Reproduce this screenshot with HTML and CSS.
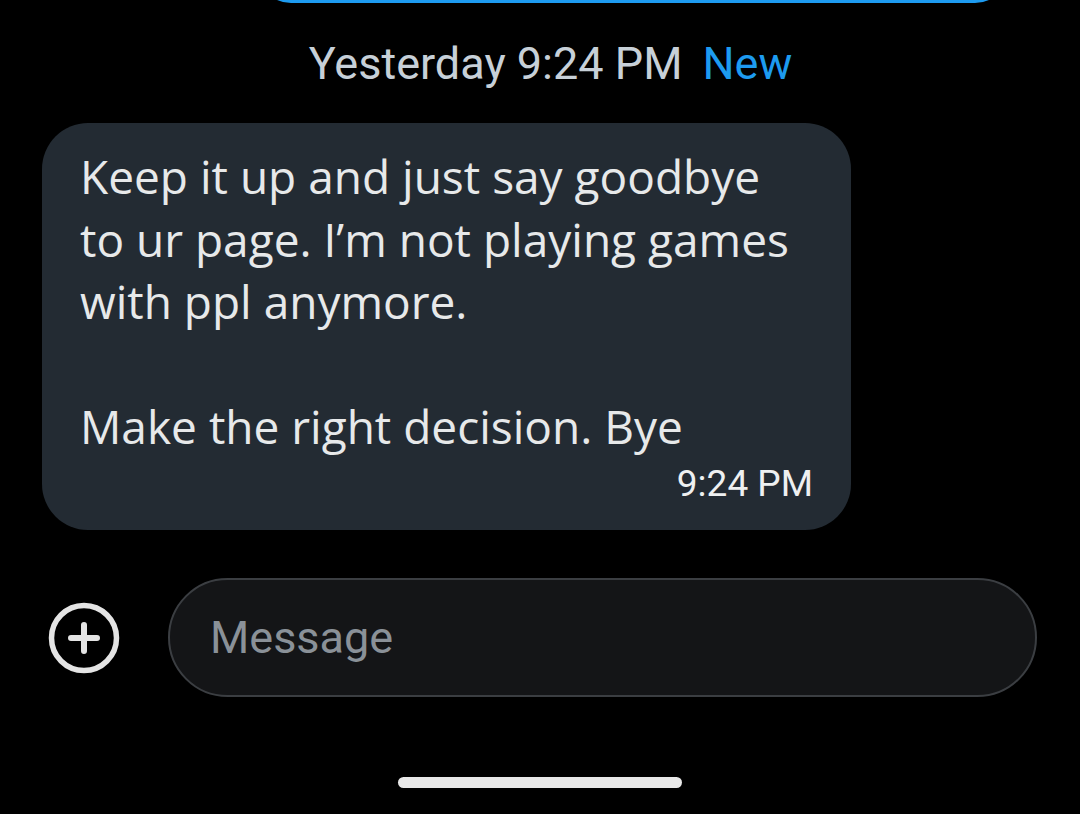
FILE: index.html
```html
<!DOCTYPE html>
<html>
<head>
<meta charset="utf-8">
<link rel="stylesheet" href="styles.css">
</head>
<body>
<div class="screen">
  <div class="top-pill"></div>
  <div class="date-row">
    <span class="date">Yesterday 9:24 PM</span>
    <span class="new">New</span>
  </div>
  <div class="bubble">
    <p class="msg">Keep it up and just say goodbye<br>to ur page. I’m not playing games<br>with ppl anymore.</p>
    <p class="msg gap">Make the right decision. Bye</p>
    <div class="time">9:24 PM</div>
  </div>
  <div class="composer">
    <svg class="plus" width="74" height="74" viewBox="0 0 74 74">
      <circle cx="37" cy="37" r="32.5" fill="none" stroke="#e4e4e4" stroke-width="5.5"/>
      <path d="M37 24v26M24 37h26" stroke="#e4e4e4" stroke-width="6" stroke-linecap="round"/>
    </svg>
    <div class="input">Message</div>
  </div>
  <div class="home-bar"></div>
</div>
</body>
</html>
```
FILE: styles.css
```css
html, body {
  margin: 0;
  padding: 0;
  background: #000;
}
.screen {
  width: 1080px;
  height: 814px;
  overflow: hidden;
  background: #000;
  display: flex;
  flex-direction: column;
}
.top-pill {
  margin: -63px 0 0 258px;
  width: 744px;
  height: 60px;
  border: 3px solid #1d9bf0;
  border-radius: 40px;
  flex: none;
}
.date-row {
  display: flex;
  justify-content: center;
  align-items: center;
  gap: 20px;
  height: 60px;
  margin-top: 30px;
  margin-left: 21px;
  font-family: Roboto, "Liberation Sans", sans-serif;
  font-size: 45px;
}
.date {
  color: #c7d0d8;
}
.new {
  color: #1d9bf0;
}
.bubble {
  margin: 30px 0 0 42px;
  width: 809px;
  height: 407px;
  box-sizing: border-box;
  background: #232b33;
  border-radius: 46px;
  padding: 22px 38px 0 38px;
  display: flex;
  flex-direction: column;
  flex: none;
}
.msg {
  margin: 0;
  font-family: "Open Sans", "Noto Sans", sans-serif;
  font-size: 46px;
  line-height: 62.5px;
  color: #e7e9ea;
}
.msg.gap {
  margin-top: 62px;
}
.time {
  align-self: flex-end;
  margin-top: 5px;
  font-family: Roboto, "Liberation Sans", sans-serif;
  font-size: 37px;
  color: #eef0f1;
}
.composer {
  display: flex;
  align-items: center;
  margin-top: 48px;
  padding-left: 47px;
  flex: none;
}
.plus {
  flex: none;
}
.input {
  margin-left: 47px;
  width: 869px;
  height: 119px;
  box-sizing: border-box;
  border: 2px solid #3b3e42;
  border-radius: 60px;
  background: #141517;
  padding-left: 40px;
  display: flex;
  align-items: center;
  font-family: Roboto, "Liberation Sans", sans-serif;
  font-size: 45px;
  color: #8a9198;
}
.home-bar {
  margin: 80px 0 0 398px;
  width: 284px;
  height: 11px;
  border-radius: 6px;
  background: #e8e8e8;
  flex: none;
}
```
